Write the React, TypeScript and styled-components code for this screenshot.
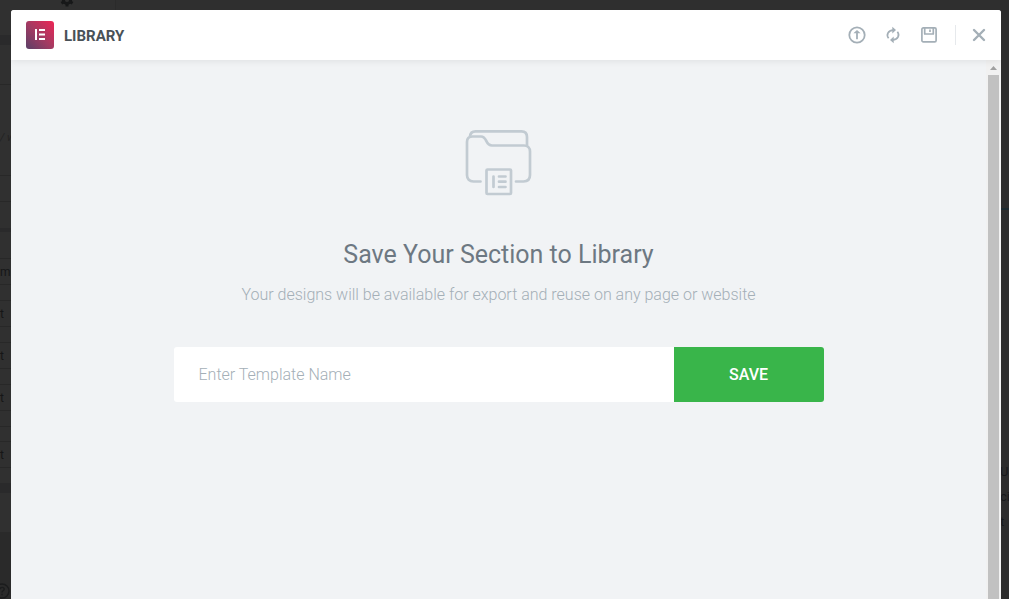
import React from "react";
import styled, { createGlobalStyle } from "styled-components";

const GlobalStyle = createGlobalStyle`
  *, *::before, *::after { box-sizing: border-box; }
  body {
    margin: 0;
    background: #2f2f2f;
    font-family: Roboto, "Liberation Sans", sans-serif;
  }
`;

const Screen = styled.div`
  position: relative;
  height: 100vh;
  overflow: hidden;
`;

const Editor = styled.div`
  display: flex;
  justify-content: space-between;
  height: 100%;
`;

const Panel = styled.aside`
  width: 116px;
  height: 100%;
  display: flex;
  flex-direction: column;
  background: #303030;
  border-right: 1px solid #2b2b2b;
`;

const PanelHeader = styled.div`
  height: 35px;
  flex: none;
  padding-left: 60px;
  color: #171819;
`;

const GearIcon = styled.svg`
  display: block;
  width: 14px;
  height: 14px;
  margin-top: -7px;
`;

const Band = styled.div<{ $height: number }>`
  height: ${(p) => p.$height}px;
  flex: none;
  background: #2a2a2b;
`;

const PanelRow = styled.div<{ $height: number; $plain?: boolean }>`
  height: ${(p) => p.$height}px;
  flex: none;
  display: flex;
  align-items: center;
  border-bottom: ${(p) => (p.$plain ? "0" : "1px solid #282828")};
  color: #151617;
  font-size: 12px;
  line-height: 16px;
`;

const HintRow = styled(PanelRow)`
  padding-top: 16px;
`;

const Hint = styled.em`
  font-size: 11px;
  color: #222;
`;

const PanelFooter = styled.div`
  flex: 1;
  display: flex;
  align-items: flex-end;
  background: #2a2a2a;
`;

const HelpIcon = styled.svg`
  display: block;
  width: 16px;
  height: 16px;
  margin-left: -6px;
`;

const Canvas = styled.main`
  width: 9px;
  height: 100%;
  display: flex;
  flex-direction: column;
  background: #2c2c2c;
`;

const CanvasRule = styled.div`
  margin-top: 208px;
  height: 2px;
  flex: none;
  background: #1c2a30;
`;

const CanvasText = styled.p`
  margin: 249px 0 0;
  color: #17181b;
  font-size: 13px;
  line-height: 25px;
`;

const Overlay = styled.div`
  position: absolute;
  inset: 0;
  padding: 10px 8px 0 11px;
`;

const Dialog = styled.section`
  height: 100%;
  display: flex;
  flex-direction: column;
  background: #f1f3f5;
  border-radius: 3px 3px 0 0;
  overflow: hidden;
`;

const Header = styled.header`
  position: relative;
  height: 50px;
  flex: none;
  display: flex;
  align-items: center;
  justify-content: space-between;
  padding-left: 15px;
  background: #fff;
  box-shadow: 0 0 8px rgba(0, 0, 0, 0.1);
`;

const Brand = styled.div`
  display: flex;
  align-items: center;
  gap: 10px;
`;

const Logo = styled.svg`
  display: block;
  width: 28px;
  height: 28px;
`;

const BrandName = styled.h1`
  margin: 0;
  padding-top: 2px;
  color: #495157;
  font-size: 15px;
  line-height: 20px;
  font-weight: 700;
`;

const Actions = styled.div`
  display: flex;
  align-items: center;
`;

const IconButton = styled.button<{ $wide?: boolean }>`
  width: ${(p) => (p.$wide ? 44 : 36)}px;
  height: 50px;
  display: flex;
  align-items: center;
  justify-content: center;
  padding: 0;
  border: 0;
  background: none;
  color: #a4afb7;
  cursor: pointer;
`;

const Divider = styled.span`
  width: 1px;
  height: 20px;
  margin: 0 1px 0 8px;
  background: #e6e9ec;
`;

const Body = styled.div`
  flex: 1;
  min-height: 0;
  display: flex;
`;

const Content = styled.div`
  flex: 1;
  display: flex;
  flex-direction: column;
  align-items: center;
  padding: 69px 20px 0;
`;

const Folder = styled.svg`
  display: block;
  width: 67px;
  height: 67px;
`;

const Title = styled.h2`
  margin: 44px 0 0;
  color: #6d7882;
  font-size: 25px;
  line-height: 30px;
  font-weight: 400;
`;

const Subtitle = styled.p`
  margin: 15px 0 0;
  color: #a4afb7;
  font-size: 16px;
  line-height: 20px;
  font-weight: 300;
`;

const Form = styled.form`
  width: 100%;
  max-width: 650px;
  height: 55px;
  margin-top: 42px;
  display: flex;
  border-radius: 3px;
  overflow: hidden;
`;

const NameInput = styled.input`
  flex: 1;
  min-width: 0;
  padding: 0 25px;
  border: 0;
  outline: 0;
  background: #fff;
  color: #6d7882;
  font: 300 16px/20px Roboto, "Liberation Sans", sans-serif;
  &::placeholder { color: #a4afb7; opacity: 1; }
`;

const SaveButton = styled.button`
  width: 150px;
  border: 0;
  padding: 0;
  background: #39b54a;
  color: #fff;
  font: 500 16px/20px Roboto, "Liberation Sans", sans-serif;
  cursor: pointer;
`;

const Scrollbar = styled.div`
  width: 15px;
  flex: none;
  display: flex;
  flex-direction: column;
  background: #f1f1f1;
`;

const ScrollArrow = styled.svg`
  display: block;
  width: 15px;
  height: 15px;
`;

const ScrollThumb = styled.div`
  flex: 1;
  margin: 0 2px;
  background: #c1c1c1;
`;

const Gear = () => (
  <GearIcon viewBox="0 0 14 14" aria-hidden="true">
    <path stroke="currentColor" strokeWidth="3" d="M7 0.5V13.5M1.4 3.7L12.6 10.3M1.4 10.3L12.6 3.7" />
    <circle cx="7" cy="7" r="3.6" fill="#303030" stroke="currentColor" strokeWidth="3" />
  </GearIcon>
);

export default function App() {
  return (
    <Screen>
      <GlobalStyle />
      <Editor aria-hidden="true">
        <Panel>
          <PanelHeader><Gear /></PanelHeader>
          <Band $height={10} />
          <PanelRow $height={40} />
          <HintRow $height={91}><Hint>/ w</Hint></HintRow>
          <PanelRow $height={26} />
          <PanelRow $height={26} $plain />
          <Band $height={4} />
          <PanelRow $height={27} />
          <PanelRow $height={26}>m</PanelRow>
          <PanelRow $height={16} />
          <PanelRow $height={26}>t</PanelRow>
          <PanelRow $height={16} />
          <PanelRow $height={26}>t</PanelRow>
          <PanelRow $height={16} />
          <PanelRow $height={26}>t</PanelRow>
          <PanelRow $height={16} />
          <PanelRow $height={15} />
          <PanelRow $height={26}>t</PanelRow>
          <PanelRow $height={15} $plain />
          <Band $height={10} />
          <PanelRow $height={39} $plain />
          <PanelFooter>
            <HelpIcon viewBox="0 0 16 16" fill="none" stroke="#1b1c1d" strokeWidth="1.4">
              <circle cx="8" cy="8" r="7" />
              <path d="M6 6.3C6 3.7 10.2 3.9 10.2 6.2C10.2 7.7 8 7.8 8 9.4M8 10.8V12.2" />
            </HelpIcon>
          </PanelFooter>
        </Panel>
        <Canvas>
          <CanvasRule />
          <CanvasText>U<br />ci<br />t</CanvasText>
        </Canvas>
      </Editor>

      <Overlay>
        <Dialog role="dialog" aria-label="Library">
          <Header>
            <Brand>
              <Logo viewBox="0 0 28 28" aria-hidden="true">
                <defs>
                  <linearGradient id="brand" x1="0" y1="1" x2="1" y2="0">
                    <stop offset="0" stopColor="#5b4068" />
                    <stop offset="0.5" stopColor="#a53a62" />
                    <stop offset="1" stopColor="#ee2555" />
                  </linearGradient>
                </defs>
                <rect width="28" height="28" rx="3" fill="url(#brand)" />
                <path fill="#fff" d="M9 8h2v11H9zM13 8h6v2h-6zM13 12.5h6v2h-6zM13 17h6v2h-6z" />
              </Logo>
              <BrandName>LIBRARY</BrandName>
            </Brand>
            <Actions>
              <IconButton type="button" aria-label="Import template">
                <svg width="18" height="18" viewBox="0 0 18 18" fill="none" stroke="currentColor" strokeWidth="1.8">
                  <circle cx="9" cy="9" r="7.7" />
                  <path d="M9 13.2V5.5" />
                  <path d="M9 3.9L12.6 7.3H5.4Z" fill="currentColor" stroke="none" />
                </svg>
              </IconButton>
              <IconButton type="button" aria-label="Sync library">
                <svg width="18" height="18" viewBox="0 0 18 18" fill="none" stroke="currentColor" strokeWidth="1.7">
                  <path d="M4.6 12.3C2.1 9.2 3.7 4.4 9.3 4.1" />
                  <path d="M13.4 5.7C15.9 8.8 14.3 13.6 8.7 13.9" />
                  <path d="M8.3 0.8L12 4.1L8.3 7.4ZM9.7 10.6L6 13.9L9.7 17.2Z" fill="currentColor" stroke="none" />
                </svg>
              </IconButton>
              <IconButton type="button" aria-label="Save template">
                <svg width="18" height="18" viewBox="0 0 18 18" fill="none" stroke="currentColor" strokeWidth="1.7" strokeLinejoin="round">
                  <rect x="1.9" y="1.9" width="14.2" height="14" rx="1.4" />
                  <path d="M4.7 2V8H13.3V2M10 3.4V6" />
                </svg>
              </IconButton>
              <Divider />
              <IconButton type="button" $wide aria-label="Close">
                <svg width="14" height="14" viewBox="0 0 14 14" fill="none" stroke="currentColor" strokeWidth="2.4" strokeLinecap="round">
                  <path d="M2 2L12 12M12 2L2 12" />
                </svg>
              </IconButton>
            </Actions>
          </Header>

          <Body>
            <Content>
              <Folder viewBox="0 0 67 67" fill="none" stroke="#c2cbd2" strokeWidth="2.7" strokeLinecap="round" strokeLinejoin="round" aria-hidden="true">
                <path d="M15.5 52.5H8.5C4.5 52.5 2 50 2 46V13C2 9.5 4 7.5 7.5 7.5H16C22.5 7.5 20 16.5 27 16.5H59C62.7 16.5 65 19 65 22.5V46C65 50 62.7 52.5 58.5 52.5H51" />
                <path d="M5 7.5C5.3 4 7.5 2.3 10.5 2.3H56.5C60 2.3 62 4.5 62 8V16.5" />
                <rect x="21.5" y="40.5" width="24.5" height="24.5" rx="1" />
                <path d="M28.5 47.5V58M34 47.5H40.5M34 52.7H40.5M34 58H40.5" />
              </Folder>
              <Title>Save Your Section to Library</Title>
              <Subtitle>Your designs will be available for export and reuse on any page or website</Subtitle>
              <Form onSubmit={(e: React.FormEvent) => e.preventDefault()}>
                <NameInput type="text" aria-label="Template name" placeholder="Enter Template Name" />
                <SaveButton type="submit">SAVE</SaveButton>
              </Form>
            </Content>
            <Scrollbar aria-hidden="true">
              <ScrollArrow viewBox="0 0 15 15">
                <path d="M4 10L7.5 6L11 10Z" fill="#a0a0a0" />
              </ScrollArrow>
              <ScrollThumb />
            </Scrollbar>
          </Body>
        </Dialog>
      </Overlay>
    </Screen>
  );
}
